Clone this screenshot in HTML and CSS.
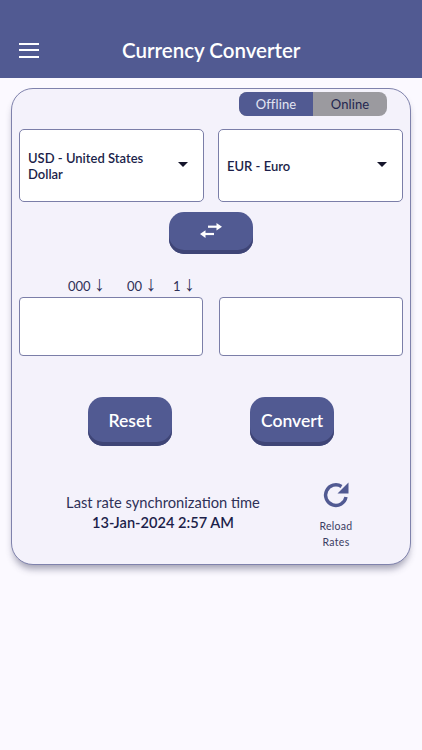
FILE: index.html
```html
<!DOCTYPE html>
<html lang="en">

<head>
    <meta charset="UTF-8">
    <title>Currency Converter</title>
    <link rel="stylesheet" href="styles.css">
</head>

<body>
    <header class="topbar">
        <button class="burger" aria-label="Menu">
            <span></span>
            <span></span>
            <span></span>
        </button>
        <h1>Currency Converter</h1>
    </header>

    <main class="card">
        <div class="mode">
            <span class="mode-item valgt">Offline</span>
            <span class="mode-item">Online</span>
        </div>

        <div class="selects">
            <div class="select">
                <span>USD - United States Dollar</span>
                <i class="caret"></i>
            </div>
            <div class="select">
                <span>EUR - Euro</span>
                <i class="caret"></i>
            </div>
        </div>

        <button class="btn swap" aria-label="Swap">
            <svg width="26" height="22" viewBox="0 0 26 22" fill="none" stroke="#fff" stroke-width="2.200">
                <path d="M10 6.700H20" />
                <path d="M18.500 3 24 6.700 18.500 10.500Z" fill="#fff" stroke="none" />
                <path d="M6 14H16" />
                <path d="M7.500 10.200 2 14 7.500 18Z" fill="#fff" stroke="none" />
            </svg>
        </button>

        <div class="hints">
            <span>000 <b>↓</b></span>
            <span>00 <b>↓</b></span>
            <span>1 <b>↓</b></span>
        </div>

        <div class="inputs">
            <input type="text">
            <input type="text">
        </div>

        <div class="actions">
            <button class="btn">Reset</button>
            <button class="btn">Convert</button>
        </div>

        <div class="sync">
            <div class="sync-text">
                <p>Last rate synchronization time</p>
                <p class="sync-date">13-Jan-2024 2:57 AM</p>
            </div>
            <div class="reload">
                <svg width="30" height="30" viewBox="0 0 30 30" fill="none">
                    <path d="M25 17A10.300 10.300 0 1 1 20.500 6.500" stroke="#515a92" stroke-width="3.400" />
                    <path d="M27.500 2.500V13.500H16.500Z" fill="#515a92" />
                </svg>
                <p>Reload<br>Rates</p>
            </div>
        </div>
    </main>
</body>

</html>
```

FILE: styles.css
```css
* {
    box-sizing: border-box;
}

body {
    margin: 0;
    min-height: 750px;
    background: #fbf9ff;
    font-family: Lato, "Open Sans", sans-serif;
    color: #1c1f4a;
}

.topbar {
    display: flex;
    align-items: center;
    height: 78px;
    padding: 22px 19px 0;
    background: #515a92;
    color: #fff;
}

.burger {
    display: flex;
    flex-direction: column;
    gap: 4.500px;
    width: 20px;
    padding: 0;
    border: none;
    background: none;
}

.burger span {
    height: 2px;
    background: #fff;
}

.topbar h1 {
    margin: 0 0 0 83px;
    font-size: 20.500px;
    font-weight: 600;
    white-space: nowrap;
}

.card {
    display: flex;
    flex-direction: column;
    width: 400px;
    height: 477px;
    margin: 10px 0 0 11px;
    padding: 3px 7px 0;
    border: 1px solid #7f82ac;
    border-radius: 22px;
    background: #f4f2fb;
    box-shadow: 0 6px 7px -2px rgba(60, 60, 90, 0.45);
}

.mode {
    display: flex;
    align-self: flex-end;
    width: 148px;
    height: 24px;
    margin-right: 16px;
    border-radius: 8px;
    overflow: hidden;
    background: #9b9a9f;
    font-size: 13px;
    letter-spacing: 0.1px;
}

.mode-item {
    display: flex;
    align-items: center;
    justify-content: center;
    flex: 1;
    color: #23264f;
}

.mode-item.valgt {
    flex: 0 0 74px;
    background: #515a92;
    color: #e4e5f2;
}

.selects {
    display: flex;
    justify-content: space-between;
    margin-top: 13px;
}

.select {
    display: flex;
    align-items: center;
    justify-content: space-between;
    width: 185px;
    height: 73px;
    padding: 0 15px 0 8px;
    border: 1px solid #7b7ea8;
    border-radius: 5px;
    background: #fff;
    font-size: 13px;
    font-weight: 600;
    line-height: 16px;
}

.select span {
    width: 130px;
}

.caret {
    flex: none;
    margin-top: -3px;
    border: 5.500px solid transparent;
    border-top: 5.500px solid #15152b;
    border-bottom: none;
}

.btn {
    width: 84px;
    height: 49px;
    padding: 0 0 2px;
    border: none;
    border-radius: 15px;
    background: #515a92;
    box-shadow: inset 0 -4px 0 #3f4576;
    color: #fff;
    font-family: inherit;
    font-size: 17.500px;
    font-weight: 600;
}

.swap {
    display: flex;
    align-items: center;
    justify-content: center;
    align-self: center;
    height: 42px;
    margin-top: 10px;
    padding: 0 0 4px;
}

.hints {
    display: grid;
    grid-template-columns: 59px 46px auto;
    height: 20px;
    margin-top: 22px;
    padding-left: 49px;
    font-size: 13px;
    line-height: 20px;
    color: #2f3158;
}

.hints b {
    font-family: "Liberation Sans", sans-serif;
    font-size: 21px;
    font-weight: 400;
    line-height: 0;
}

.inputs {
    display: flex;
    justify-content: space-between;
    margin-top: 1px;
}

.inputs input {
    width: 184px;
    height: 59px;
    border: 1px solid #7b7ea8;
    border-radius: 4px;
    background: #fff;
}

.actions {
    display: flex;
    gap: 78px;
    justify-content: center;
    margin-top: 41px;
}

.sync {
    display: flex;
    margin-top: 34px;
}

.sync-text {
    width: 288px;
    padding-top: 12px;
    text-align: center;
    font-size: 14.700px;
    line-height: 20px;
    color: #2f3158;
}

.sync-text p {
    margin: 0;
}

.sync-text .sync-date {
    margin-top: 1px;
    font-size: 14.600px;
    font-weight: 600;
    color: #1c1f4a;
}

.reload {
    width: 58px;
    text-align: center;
}

.reload svg {
    display: block;
    margin: 0 auto;
}

.reload p {
    margin: 8px 0 0;
    font-size: 10.500px;
    line-height: 16px;
    letter-spacing: 0.3px;
    color: #3b3d63;
}
```
